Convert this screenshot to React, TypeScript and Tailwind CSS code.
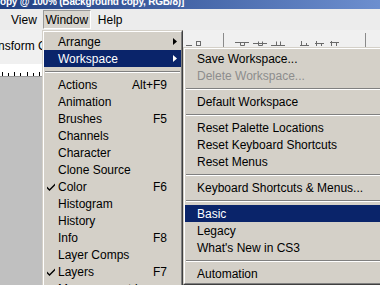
import React from "react";

const font = { fontFamily: '"Liberation Sans", Arial, sans-serif' };

type Item =
  | { sep: true }
  | {
      sep?: false;
      label: string;
      key?: string;
      check?: boolean;
      sub?: boolean;
      active?: boolean;
      disabled?: boolean;
    };

const windowItems: Item[] = [
  { label: "Arrange", sub: true },
  { label: "Workspace", sub: true, active: true },
  { sep: true },
  { label: "Actions", key: "Alt+F9" },
  { label: "Animation" },
  { label: "Brushes", key: "F5" },
  { label: "Channels" },
  { label: "Character" },
  { label: "Clone Source" },
  { label: "Color", key: "F6", check: true },
  { label: "Histogram" },
  { label: "History" },
  { label: "Info", key: "F8" },
  { label: "Layer Comps" },
  { label: "Layers", key: "F7", check: true },
  { label: "Measurement Log" },
];

const workspaceItems: Item[] = [
  { label: "Save Workspace..." },
  { label: "Delete Workspace...", disabled: true },
  { sep: true },
  { label: "Default Workspace" },
  { sep: true },
  { label: "Reset Palette Locations" },
  { label: "Reset Keyboard Shortcuts" },
  { label: "Reset Menus" },
  { sep: true },
  { label: "Keyboard Shortcuts & Menus..." },
  { sep: true },
  { label: "Basic", active: true },
  { label: "Legacy" },
  { label: "What's New in CS3" },
  { sep: true },
  { label: "Automation" },
];

function Check({ white }: { white?: boolean }) {
  return (
    <svg width="8" height="8" viewBox="0 0 8 8" className="absolute left-[3px] top-[5px]">
      <path d="M0 3.5 L2.5 6 L8 0.5 L8 2.5 L2.5 8 L0 5.5 Z" fill={white ? "#fff" : "#000"} />
    </svg>
  );
}

function Arrow({ white }: { white?: boolean }) {
  return (
    <svg width="4" height="7" viewBox="0 0 4 7" className="absolute right-[4px] top-[5px]">
      <path d="M0 0 L4 3.5 L0 7 Z" fill={white ? "#fff" : "#000"} />
    </svg>
  );
}

function Menu({ items, pl, className }: { items: Item[]; pl: string; className: string }) {
  return (
    <div
      className={`absolute border border-t-[#d4d0c8] border-l-[#d4d0c8] border-r-[#404040] border-b-[#404040] bg-[#d4d0c8] ${className}`}
    >
      <div className="border border-t-white border-l-white border-r-[#808080] border-b-[#808080] py-px">
        {items.map((it, i) =>
          it.sep ? (
            <div key={i} className="flex h-[9px] flex-col justify-center px-px">
              <div className="h-px bg-[#808080]" />
              <div className="h-px bg-white" />
            </div>
          ) : (
            <div
              key={i}
              className={`relative flex h-[17px] items-center whitespace-nowrap pr-[14px] text-[12px] ${pl} ${
                it.active ? "bg-[#0a246a] text-white" : it.disabled ? "text-[#8d8d8d]" : "text-black"
              }`}
            >
              {it.check && <Check white={it.active} />}
              <span className="flex-1">{it.label}</span>
              {it.key && <span>{it.key}</span>}
              {it.sub && <Arrow white={it.active} />}
            </div>
          )
        )}
      </div>
    </div>
  );
}

function AlignIcons() {
  return (
    <svg width="185" height="14" viewBox="0 0 185 14" className="shrink-0">
      <g stroke="#6a6a6a" fill="none" strokeWidth="1">
        <path d="M3 12.5 H9" />
        <rect x="13.5" y="8.5" width="4" height="4" />
        <path d="M40.5 0 V14" stroke="#8a8a8a" />
        <path d="M52 9.5 H66 M57.5 9.5 V12.5 H61.5 V9.5" />
        <path d="M70 10.5 H84 M75.5 8.5 V12.5 H79.5 V8.5" />
        <path d="M88 12.5 H102 M93.5 8.5 V12.5 H97.5 V8.5" />
        <path d="M118.5 8 V13 M123.5 10 V13 M117 12.5 H126" />
        <path d="M133.5 8 V13 M138.5 10 V13 M132 10.5 H141" />
        <path d="M148.5 8 V13 M153.5 10 V13 M147 9.5 H156" />
        <path d="M182.5 0 V14" stroke="#8a8a8a" />
      </g>
    </svg>
  );
}

export default function App() {
  return (
    <div className="relative h-[285px] w-[380px] overflow-hidden bg-[#c0c0c0]" style={font}>
      {/* title bar */}
      <div className="h-[9px] overflow-hidden bg-gradient-to-r from-[#213f82] to-[#6d8fcf]">
        <div className="-mt-[4px] whitespace-nowrap text-[10px] font-bold leading-[12px] tracking-[-0.2px] text-white">
          opy @ 100% (Background copy, RGB/8)]
        </div>
      </div>

      {/* menu bar */}
      <div className="flex h-[21px] items-center bg-[#ececec] text-[12px] text-black">
        <span className="ml-[11px]">View</span>
        <span className="ml-[6px] flex h-[19px] w-[48px] items-center justify-center border border-t-[#9a9a9a] border-l-[#9a9a9a] border-r-white border-b-white bg-[#d8d5cf]">
          Window
        </span>
        <span className="ml-[7px]">Help</span>
      </div>

      {/* options bar */}
      <div className="flex h-[34px] bg-[#f0f0f0]">
        <div className="flex h-[32px] w-[42px] items-center text-[12px] text-black">
          <span className="-ml-[2px] whitespace-nowrap">nsform C</span>
        </div>
        <div className="ml-[141px] flex h-[17px] items-end">
          <AlignIcons />
        </div>
      </div>

      {/* ruler */}
      <div className="flex h-[13px] items-end border-b border-[#999] bg-white">
        <div className="flex w-[42px] items-end justify-between px-[2px]">
          {[0, 1, 2, 3, 4, 5, 6].map((i) => (
            <span key={i} className={`w-px bg-black ${i % 2 === 0 ? "h-[4px]" : "h-[3px]"}`} />
          ))}
        </div>
      </div>

      {/* canvas area */}
      <div className="h-[208px]" />

      <Menu items={windowItems} pl="pl-[14px]" className="left-[42px] top-[30px] w-[141px]" />
      <Menu items={workspaceItems} pl="pl-[12px]" className="left-[183px] top-[47px] w-[220px]" />
    </div>
  );
}
